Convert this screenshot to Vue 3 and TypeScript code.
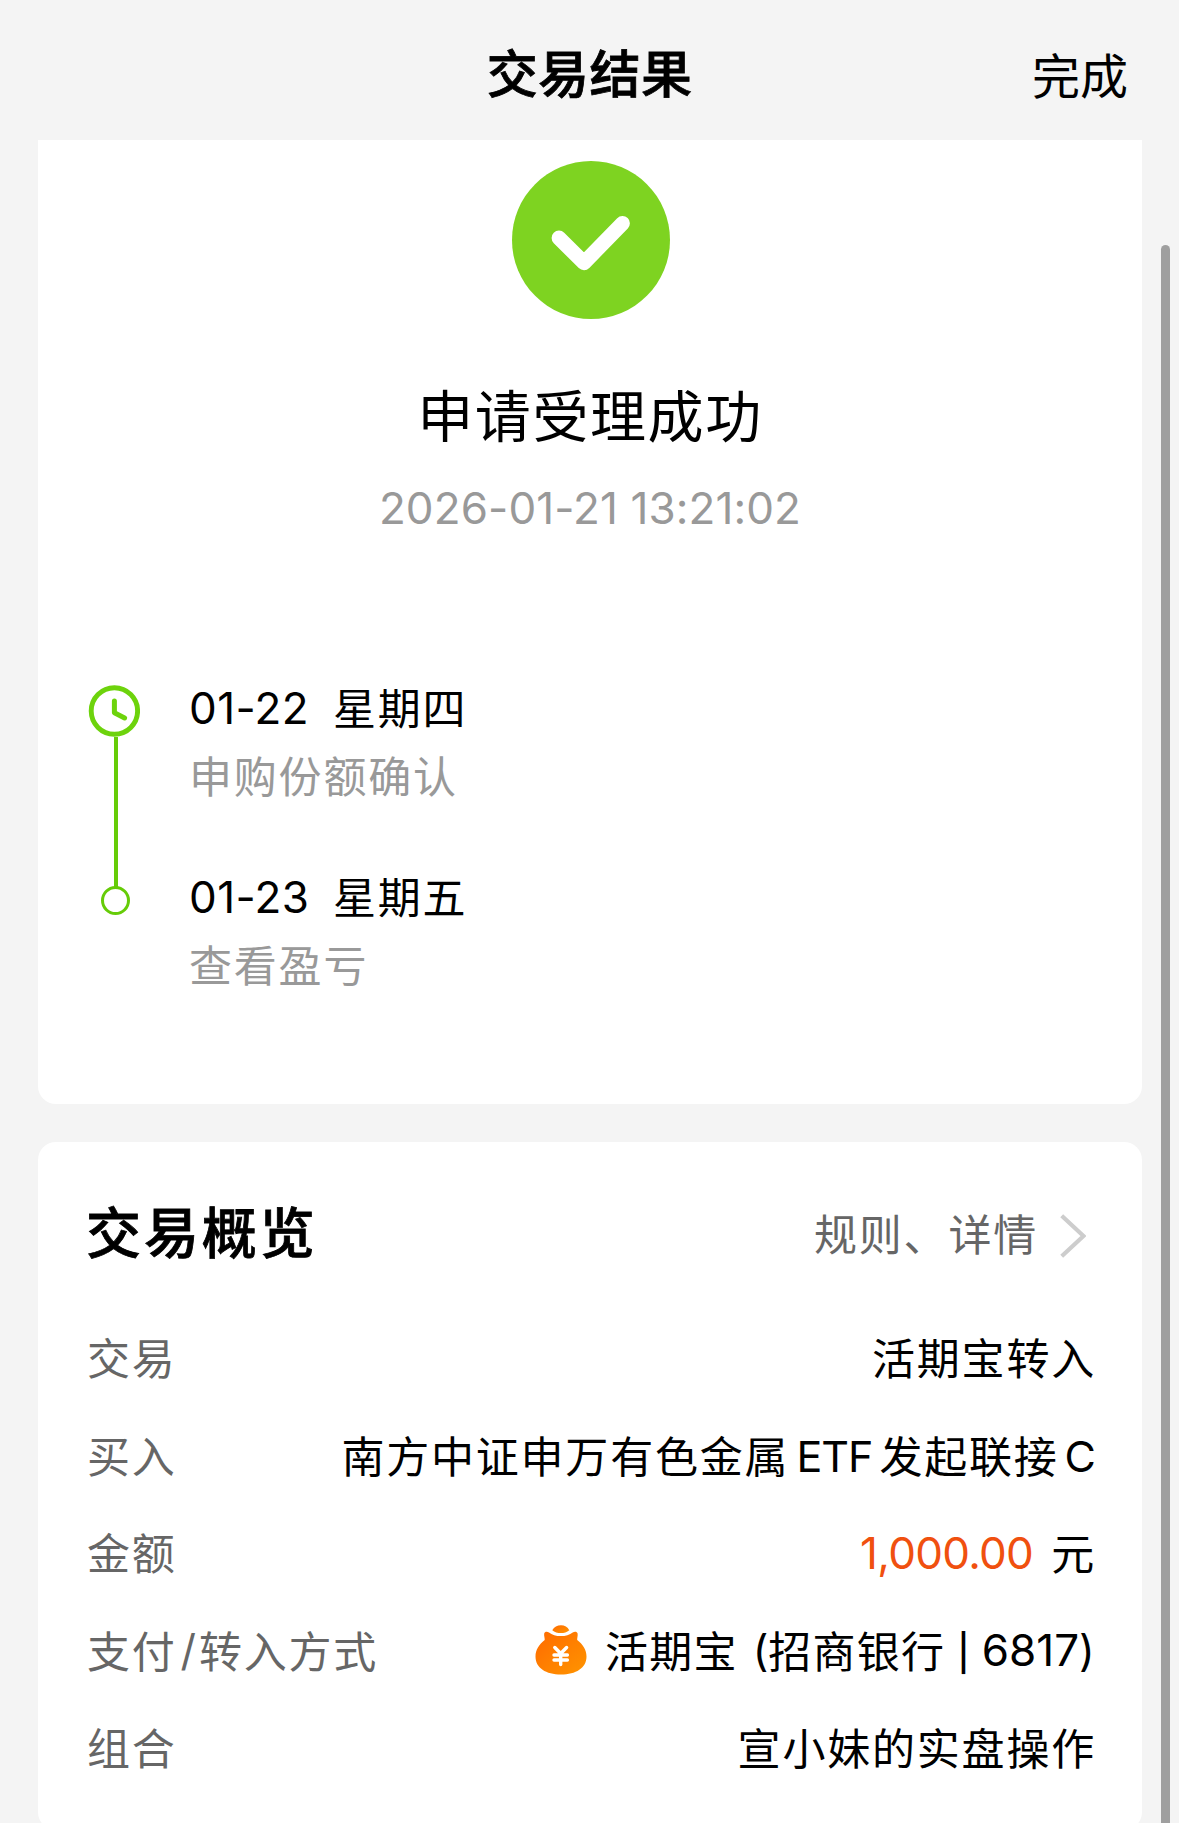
<script setup lang="ts">
interface Step {
  date: string
  weekday: string
  note: string
}

type SegmentKind = 'han' | 'ticker' | 'amount' | 'unit' | 'paren' | 'bar' | 'digits' | 'close' | 'share'

interface Segment {
  text: string
  kind: SegmentKind
}

interface Row {
  label: string[]
  icon?: boolean
  value: Segment[]
}

const steps: Step[] = [
  { date: '01-22', weekday: '星期四', note: '申购份额确认' },
  { date: '01-23', weekday: '星期五', note: '查看盈亏' },
]

const rows: Row[] = [
  { label: ['交易'], value: [{ text: '活期宝转入', kind: 'han' }] },
  {
    label: ['买入'],
    value: [
      { text: '南方中证申万有色金属', kind: 'han' },
      { text: 'ETF', kind: 'ticker' },
      { text: '发起联接', kind: 'han' },
      { text: 'C', kind: 'share' },
    ],
  },
  {
    label: ['金额'],
    value: [
      { text: '1,000.00', kind: 'amount' },
      { text: '元', kind: 'unit' },
    ],
  },
  {
    label: ['支付', '/', '转入方式'],
    icon: true,
    value: [
      { text: '活期宝', kind: 'han' },
      { text: '(', kind: 'paren' },
      { text: '招商银行', kind: 'han' },
      { text: '|', kind: 'bar' },
      { text: '6817', kind: 'digits' },
      { text: ')', kind: 'close' },
    ],
  },
  { label: ['组合'], value: [{ text: '宣小妹的实盘操作', kind: 'han' }] },
]
</script>

<template>
  <div class="page">
    <header class="header">
      <h1 class="header-title">交易结果</h1>
      <a class="header-done">完成</a>
    </header>

    <section class="card result">
      <svg class="success" viewBox="0 0 158 158">
        <circle cx="79" cy="79" r="79" fill="#7ed321" />
        <path d="M47 77L72 101.800L110.500 62.300" fill="none" stroke="#fff" stroke-width="14.800" stroke-linecap="round" stroke-linejoin="round" />
      </svg>
      <h2 class="result-title">申请受理成功</h2>
      <p class="result-time">2026-01-21 13:21:02</p>

      <ol class="steps">
        <li v-for="(step, i) in steps" :key="step.date" class="step">
          <div class="rail">
            <svg v-if="i === 0" class="clock" viewBox="0 0 52 52">
              <circle cx="26.400" cy="26" r="23.200" fill="none" stroke="#6dd30c" stroke-width="4.900" />
              <path d="M26.400 16V27.800L36.600 33" fill="none" stroke="#6dd30c" stroke-width="5" stroke-linecap="round" stroke-linejoin="round" />
            </svg>
            <i v-else class="dot"></i>
            <i v-if="i < steps.length - 1" class="line"></i>
          </div>
          <div class="step-body">
            <div class="step-day">
              <span class="step-date">{{ step.date }}</span>
              <span class="han">{{ step.weekday }}</span>
            </div>
            <div class="step-note">{{ step.note }}</div>
          </div>
        </li>
      </ol>
    </section>

    <section class="card overview">
      <div class="overview-head">
        <h2 class="overview-title">交易概览</h2>
        <a class="overview-link">
          <span>规则、详情</span>
          <svg class="chevron" viewBox="0 0 26 44">
            <path d="M1.700 1.700L23.500 22L1.700 42.300" fill="none" stroke="#cdcdcd" stroke-width="4.200" />
          </svg>
        </a>
      </div>

      <div v-for="row in rows" :key="row.label[0]" class="row">
        <div class="label">
          <span v-for="part in row.label" :key="part" :class="part === '/' ? 'slash' : 'han'">{{ part }}</span>
        </div>
        <div class="value" :class="{ payment: row.icon }">
          <svg v-if="row.icon" class="bag" viewBox="0 0 52 50">
            <defs>
              <linearGradient id="bagFill" x1="0" y1="0" x2="1" y2="1">
                <stop offset="0" stop-color="#ff6a00" />
                <stop offset="1" stop-color="#ff9500" />
              </linearGradient>
            </defs>
            <path d="M17.300 5.200C19 1.800 22.400 0.300 26 0.300S32.600 1.800 34.300 5.200C32 7.200 29 8 25.800 8S19.600 7.200 17.300 5.200Z" fill="url(#bagFill)" />
            <path d="M9.200 8.600C9.600 6.600 12 6.300 14 7.400C17 9.800 21 11 25.800 11S34.700 9.800 37.700 7.400C39.800 6.300 42.200 6.600 42.600 8.600C43 11 42 13 42.200 15C48 19.300 51.500 25 51.500 31.500C51.500 43 41 49.500 26 49.500S0.500 43 0.500 31.500C0.500 25 4 19.300 9.700 15C9.900 13 8.800 11 9.200 8.600Z" fill="url(#bagFill)" />
            <path d="M19.800 22.500L25.700 28.500L31.600 22.500M19 30H32.400M19 35H32.400M25.700 29V39.500" fill="none" stroke="#fff" stroke-width="3.400" stroke-linecap="round" />
          </svg>
          <span v-for="(seg, k) in row.value" :key="k" :class="seg.kind">{{ seg.text }}</span>
        </div>
      </div>
    </section>

    <div class="scrollbar"></div>
  </div>
</template>

<style>
body {
  background: #f4f4f4;
}
</style>

<style scoped>
.page {
  position: relative;
  box-sizing: border-box;
  width: 1179px;
  height: 1823px;
  overflow: hidden;
  padding: 0 37px 0 38px;
  background: #f4f4f4;
  color: #000;
  font-family: Inter, "Noto Sans CJK SC", sans-serif;
  font-size: 43px;
  letter-spacing: 1.8px;
}

h1,
h2,
p,
ol {
  margin: 0;
  padding: 0;
}

i {
  display: block;
}

.header {
  display: grid;
  grid-template-columns: 1fr auto 1fr;
  align-items: center;
  height: 140px;
}

.header-title {
  grid-column: 2;
  font-size: 51px;
  font-weight: 500;
  -webkit-text-stroke: 0.8px #000;
  line-height: 72px;
  letter-spacing: 0.4px;
  padding: 9px 1px 0 0;
}

.header-done {
  justify-self: end;
  padding: 13px 14px 0 0;
  font-size: 48px;
  line-height: 72px;
  letter-spacing: 0;
}

.card {
  background: #fff;
  border-radius: 18px;
}

.result {
  display: flex;
  flex-direction: column;
  align-items: center;
  box-sizing: border-box;
  height: 964px;
  padding-top: 21px;
  border-radius: 0 0 18px 18px;
}

.success {
  width: 158px;
  height: 158px;
  margin-left: 2px;
}

.result-title {
  margin-top: 58px;
  font-size: 56px;
  font-weight: 400;
  line-height: 80px;
  letter-spacing: 1.6px;
}

.result-time {
  margin-top: 21px;
  color: #999;
  font-size: 44px;
  line-height: 60px;
  letter-spacing: 0.1px;
}

.steps {
  align-self: stretch;
  margin-top: 139px;
  padding-left: 50px;
  list-style: none;
}

.step {
  display: flex;
  height: 189px;
}

.rail {
  display: flex;
  flex-direction: column;
  align-items: center;
  width: 54px;
}

.clock {
  flex: none;
  width: 52px;
  height: 52px;
  margin: 8px 2px 0 0;
}

.line {
  flex: none;
  width: 4px;
  height: 150px;
  margin-left: 2px;
  background: #66cc08;
}

.dot {
  box-sizing: border-box;
  width: 29px;
  height: 29px;
  margin: 20px 0 0 1px;
  border: 3px solid #66cc08;
  border-radius: 50%;
}

.step-body {
  padding-left: 47px;
}

.step-day {
  display: flex;
  height: 60px;
  line-height: 60px;
}

.step-day .han {
  padding-top: 2px;
}

.step-date {
  width: 144px;
  padding-top: 1px;
  font-size: 44px;
  letter-spacing: 0.4px;
}

.step-note {
  margin-top: 10px;
  color: #999;
  line-height: 60px;
}

.overview {
  box-sizing: border-box;
  height: 688px;
  margin-top: 38px;
  padding: 50px 46px 0 49px;
}

.overview-head {
  display: flex;
  align-items: center;
  justify-content: space-between;
  height: 80px;
  margin-bottom: 37px;
}

.overview-title {
  margin-left: -1px;
  padding-top: 2px;
  font-size: 55px;
  font-weight: 500;
  -webkit-text-stroke: 0.8px #000;
  letter-spacing: 2.9px;
  line-height: 80px;
}

.overview-link {
  display: flex;
  align-items: center;
  gap: 22px;
  padding-right: 10px;
  color: #666;
}

.chevron {
  width: 26px;
  height: 44px;
  margin-top: 8px;
}

.row {
  display: flex;
  align-items: center;
  justify-content: space-between;
  height: 97.500px;
  line-height: 60px;
}

.label,
.value {
  display: flex;
  align-items: center;
}

.label {
  color: #666;
}

.han,
.unit {
  padding-top: 3px;
}

.slash {
  margin: 0 1px 0 4px;
}

.ticker {
  margin: 0 7px 0 7px;
  padding-top: 1px;
  font-size: 43px;
  letter-spacing: -1px;
}

.share {
  margin: 0 1px 0 6px;
  padding-top: 1px;
  font-size: 43px;
  letter-spacing: -1px;
}

.amount {
  margin-right: 18px;
  color: #f0500f;
  font-size: 44px;
  letter-spacing: -0.7px;
}

.payment {
  letter-spacing: 1.2px;
}

.bag {
  width: 52px;
  height: 50px;
  margin-right: 18px;
}

.paren {
  margin-left: 15px;
  letter-spacing: 0;
}

.bar {
  margin: 0 11px 0 12px;
  padding-top: 5px;
  font-size: 36px;
  font-weight: 500;
}

.digits {
  font-size: 44px;
  letter-spacing: 0;
}

.scrollbar {
  position: absolute;
  top: 245px;
  right: 9px;
  bottom: -20px;
  width: 9px;
  border-radius: 5px;
  background: #9f9f9f;
}
</style>
